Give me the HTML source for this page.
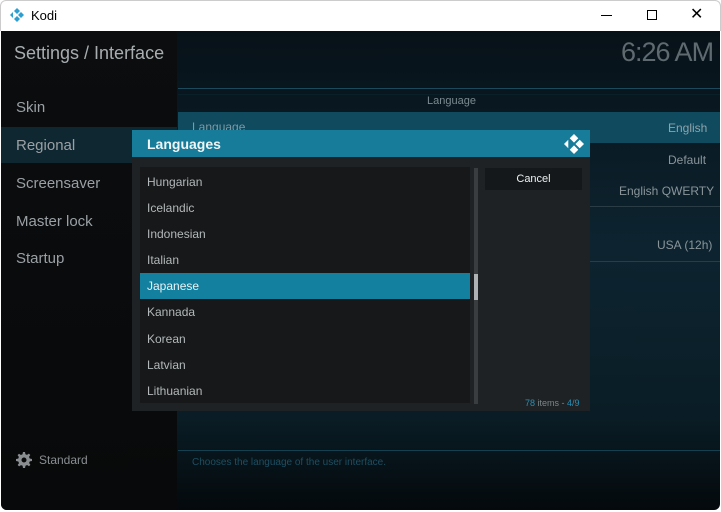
<!DOCTYPE html>
<html><head><meta charset="utf-8"><style>
*{margin:0;padding:0;box-sizing:border-box}
body{width:721px;height:512px;overflow:hidden;background:#fff;font-family:"Liberation Sans",sans-serif;position:relative}
.a{position:absolute;white-space:nowrap}
#win{position:absolute;left:1px;top:31px;width:719px;height:479px;background:linear-gradient(180deg,#071118 0%,#0d2430 45%,#0a1d26 80%,#04090c 100%);overflow:hidden;border-radius:0 0 6px 6px}
#left{position:absolute;left:0;top:0;width:176px;height:479px;background:linear-gradient(180deg,#0b0d0f,#08090a)}
.lt{color:#9aa0a4;font-size:15px}
</style></head><body>
<div class="a" style="left:0;top:0;width:721px;height:31px;background:#fff;border:1px solid #ccc;border-bottom:none;border-radius:6px 6px 0 0"></div>
<svg class="a" style="left:10px;top:8px" width="14" height="14" viewBox="0 0 14 14"><g fill="#2a9fd0"><path d="M7 0l3 3-3 3-3-3z"/><path d="M11 4l3 3-3 3-3-3z"/><path d="M7 8l3 3-3 3-3-3z"/><path d="M0 7l3-3v6z"/></g></svg>
<div class="a" style="left:31px;top:8px;font-size:13px;color:#000">Kodi</div>
<div class="a" style="left:601px;top:15px;width:11px;height:1px;background:#000"></div>
<div class="a" style="left:647px;top:10px;width:10px;height:10px;border:1px solid #000"></div>
<div class="a" style="left:690px;top:4px;font-size:16px;color:#000">✕</div>
<div id="win">
<div id="left"></div>
<div class="a" style="left:0;top:96px;width:176px;height:36px;background:#0f2731"></div>
<div class="a" style="left:13px;top:12px;font-size:18px;color:#a8adb0">Settings / Interface</div>
<div class="a" style="left:620px;top:6px;font-size:27px;color:#5e6a70;letter-spacing:-1px">6:26 AM</div>
<div class="a lt" style="left:15px;top:68px">Skin</div>
<div class="a lt" style="left:15px;top:106px">Regional</div>
<div class="a lt" style="left:15px;top:144px">Screensaver</div>
<div class="a lt" style="left:15px;top:182px">Master lock</div>
<div class="a lt" style="left:15px;top:219px">Startup</div>
<svg class="a" style="left:15px;top:421px" width="16" height="16" viewBox="0 0 16 16"><path fill="#8a8e91" d="M7 0h2l.4 2.2 1.6.7 1.9-1.3 1.4 1.4-1.3 1.9.7 1.6L16 7v2l-2.2.4-.7 1.6 1.3 1.9-1.4 1.4-1.900-1.3-1.6.7L9 16H7l-.4-2.2-1.6-.7-1.9 1.3-1.4-1.4 1.3-1.9-.7-1.6L0 9V7l2.2-.4.7-1.6-1.3-1.9 1.4-1.4 1.9 1.3 1.6-.7zM8 5.5a2.5 2.5 0 100 5 2.5 2.5 0 000-5z"/></svg>
<div class="a" style="left:38px;top:422px;font-size:12px;color:#8a8e91">Standard</div>
<div class="a" style="left:177px;top:57px;width:542px;height:1px;background:#1b4a5a"></div>
<div class="a" style="left:177px;top:63px;width:542px;height:1px;background:#0a2029"></div>
<div class="a" style="left:426px;top:64px;font-size:11px;color:#7b8a90">Language</div>
<div class="a" style="left:177px;top:81px;width:542px;height:31px;background:#0f4a5e"></div>
<div class="a" style="left:191px;top:89px;font-size:12px;color:#7d9aa5">Language</div>
<div class="a" style="left:667px;top:90px;font-size:12px;color:#8fa3ab">English</div>
<div class="a" style="left:667px;top:122px;font-size:12px;color:#8a959a">Default</div>
<div class="a" style="left:618px;top:153px;font-size:12px;color:#8a959a">English QWERTY</div>
<div class="a" style="left:177px;top:175px;width:542px;height:1px;background:#2a3d45"></div>
<div class="a" style="left:656px;top:207px;font-size:12px;color:#8a959a">USA (12h)</div>
<div class="a" style="left:177px;top:230px;width:542px;height:1px;background:#2a3d45"></div>
<div class="a" style="left:177px;top:419px;width:542px;height:1px;background:#15404f"></div>
<div class="a" style="left:191px;top:426px;font-size:10px;color:#1d4f62">Chooses the language of the user interface.</div>
</div>
<div class="a" style="left:132px;top:130px;width:458px;height:281px;background:#1e2225"></div>
<div class="a" style="left:132px;top:130px;width:458px;height:27px;background:#177c9a"></div>
<div class="a" style="left:147px;top:136px;font-size:14px;font-weight:bold;color:#f0f4f5">Languages</div>
<svg class="a" style="left:564px;top:134px" width="20" height="20" viewBox="0 0 14 14"><g fill="#fff"><path d="M7 0l3 3-3 3-3-3z"/><path d="M11 4l3 3-3 3-3-3z"/><path d="M7 8l3 3-3 3-3-3z"/><path d="M0 7l3-3v6z"/></g></svg>
<div class="a" style="left:140px;top:167px;width:330px;height:236px;background:#161819"></div>
<div class="a" style="left:474px;top:168px;width:4px;height:236px;background:#3a3d40"></div>
<div class="a" style="left:474px;top:274px;width:4px;height:26px;background:#aeb2b5"></div>
<div class="a" style="left:485px;top:168px;width:97px;height:22px;background:#15181a"></div>
<div class="a" style="left:485px;top:173px;width:97px;text-align:center;font-size:11px;color:#eceff0">Cancel</div>
<div class="a" style="left:140px;top:273px;width:330px;height:26px;background:#13809f"></div>
<div style="position:absolute;left:147px;top:169px;font-size:12px;color:#b4b8ba;line-height:26.1px">
Hungarian<br>Icelandic<br>Indonesian<br>Italian<br><span style="color:#e8f2f5">Japanese</span><br>Kannada<br>Korean<br>Latvian<br>Lithuanian</div>
<div class="a" style="left:525px;top:398px;font-size:9px;color:#7d868a"><span style="color:#2a8fb5">78</span> items - <span style="color:#2a8fb5">4/9</span></div>
</body></html>
